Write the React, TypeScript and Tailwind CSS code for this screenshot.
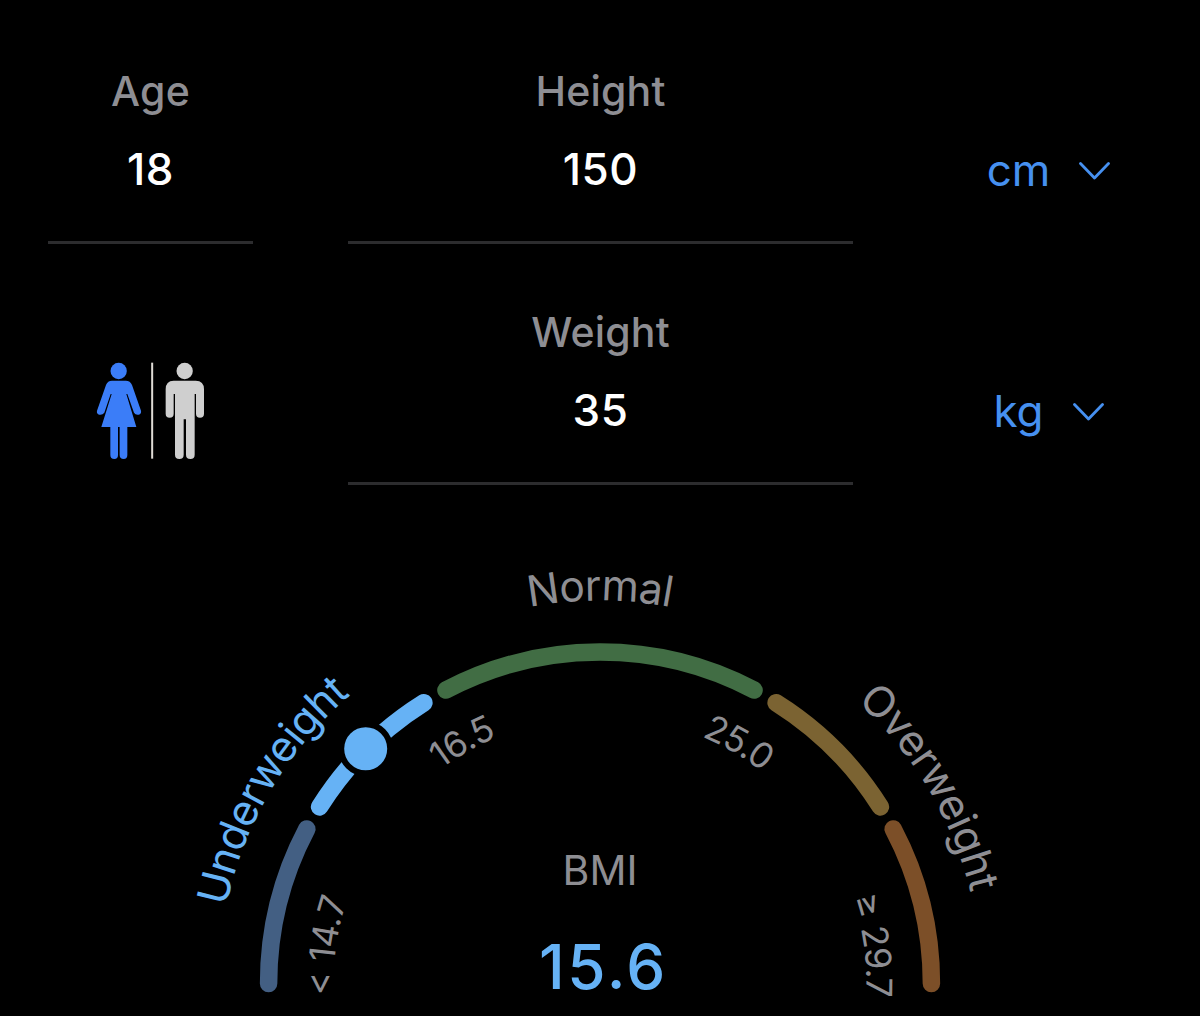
import React from "react";

const CX = 600;
const CY = 983.5;
const TRACK_RADIUS = 331.4;

// Angles are in degrees, measured counter-clockwise from the positive x axis.
function point(radius: number, angle: number) {
  const a = (angle * Math.PI) / 180;
  return `${(CX + radius * Math.cos(a)).toFixed(2)} ${(CY - radius * Math.sin(a)).toFixed(2)}`;
}

function arc(radius: number, from: number, to: number) {
  return `M ${point(radius, from)} A ${radius} ${radius} 0 0 1 ${point(radius, to)}`;
}

const segments = [
  { from: 180, to: 152.2, color: "#435f83" },
  { from: 147.8, to: 122.1, color: "#66b2f5" },
  { from: 117.7, to: 62.3, color: "#416d44" },
  { from: 57.9, to: 32.2, color: "#7b6332" },
  { from: 27.8, to: 0, color: "#7c4f28" },
];

const arcLabels = [
  { id: "under", text: "Underweight", radius: 381.5, angle: 149.6, size: 42.5, length: 250, color: "#66b2f5" },
  { id: "normal", text: "Normal", radius: 383, angle: 90, size: 42.5, length: 142, color: "#8e8e93" },
  { id: "over", text: "Overweight", radius: 381.5, angle: 30.7, size: 42.5, length: 226, color: "#8e8e93" },
  { id: "t1", text: "< 14.7", radius: 266.5, angle: 172.1, size: 35.5, length: 97, color: "#8e8e93" },
  { id: "t2", text: "16.5", radius: 267, angle: 119.6, size: 35.5, length: 65, color: "#8e8e93" },
  { id: "t3", text: "25.0", radius: 267, angle: 60, size: 35.5, length: 71, color: "#8e8e93" },
  { id: "t4", text: "≥ 29.7", radius: 266.5, angle: 7.9, size: 35.5, length: 101, color: "#8e8e93" },
];

function Field({ label, value }: { label: string; value: string }) {
  return (
    <div className="flex h-[183px] flex-col items-center border-b-[3px] border-[#2c2c2e]">
      <div className="text-[41px] leading-[60px] font-[460] tracking-[0.2px] text-[#8e8e93]">{label}</div>
      <div className="mt-[18px] text-[44px] leading-[60px] font-[480] tracking-[0.5px] text-white">{value}</div>
    </div>
  );
}

function UnitSelect({ unit }: { unit: string }) {
  return (
    <button className="mt-[79px] flex h-[60px] items-center justify-center gap-[29px] pr-[3px] text-[44px] leading-[60px] font-[440] text-[#4690f0]">
      <span>{unit}</span>
      <svg className="h-[18px] w-[31px] translate-y-px" viewBox="0 0 31 18" fill="none" stroke="currentColor" strokeWidth="2.8" strokeLinecap="round" strokeLinejoin="round">
        <path d="M1.5 1.5 15.5 16 29.5 1.5" />
      </svg>
    </button>
  );
}

function GenderToggle() {
  return (
    <button className="mt-[48px] flex h-[120px] justify-center pr-[2px]" aria-label="Gender">
      <svg className="h-[120px] w-[140px]" viewBox="0 0 420 360">
        <g fill="#3b7df8">
          <circle cx="116" cy="63" r="24.5" />
          <path d="M96 92H137Q151 92 156 105L183 182Q185 191 176 194Q167 196 162 188L142 132H139L169 231H142V315Q142 327 131 327Q119 327 119 315V231H114V315Q114 327 103 327Q91 327 91 315V231H64L95 132H92L73 188Q67 196 58 194Q49 191 51 182L78 105Q83 92 96 92Z" />
        </g>
        <rect x="213.500" y="38" width="6" height="288" fill="#dedad4" />
        <g fill="#cfcfcf">
          <circle cx="314" cy="63" r="24.500" />
          <path d="M281 92H347Q372 92 372 118V191Q372 203 360 203Q348 203 348 191V132H344V314Q344 327 331 327Q318 327 318 314V208H311V314Q311 327 298 327Q285 327 285 314V132H281V191Q281 203 269 203Q257 203 257 191V118Q257 92 281 92Z" />
        </g>
      </svg>
    </button>
  );
}

function Gauge() {
  return (
    <svg className="block h-[476px] w-[1200px]" viewBox="0 540 1200 476">
      {segments.map((s) => (
        <path key={s.from} d={arc(TRACK_RADIUS, s.from, s.to)} fill="none" stroke={s.color} strokeWidth="17.5" strokeLinecap="round" />
      ))}
      <circle cx="365.700" cy="748.800" r="24.500" fill="#66b2f5" stroke="#000" strokeWidth="6" />
      {arcLabels.map((l) => (
        <g key={l.id}>
          <path id={l.id} d={arc(l.radius, l.angle + 40, l.angle - 40)} fill="none" />
          <text fill={l.color} fontSize={l.size} textAnchor="middle" textLength={l.length}>
            <textPath href={`#${l.id}`} startOffset="50%" textLength={l.length}>
              {l.text}
            </textPath>
          </text>
        </g>
      ))}
      <text x="600" y="885" fontSize="41" textAnchor="middle" fill="#8e8e93">BMI</text>
      <text x="603.5" y="989" fontSize="62" textAnchor="middle" fill="#66b2f5" className="font-medium tracking-[2.6px]">15.6</text>
    </svg>
  );
}

export default function App() {
  return (
    <main className="h-[1016px] w-[1200px] overflow-hidden bg-black font-['Inter',sans-serif]">
      <section className="grid h-[540px] grid-cols-[205px_505px_204px] content-start gap-x-[95px] gap-y-[58px] px-12 pt-[61px]">
        <Field label="Age" value="18" />
        <Field label="Height" value="150" />
        <UnitSelect unit="cm" />
        <GenderToggle />
        <Field label="Weight" value="35" />
        <UnitSelect unit="kg" />
      </section>
      <Gauge />
    </main>
  );
}
